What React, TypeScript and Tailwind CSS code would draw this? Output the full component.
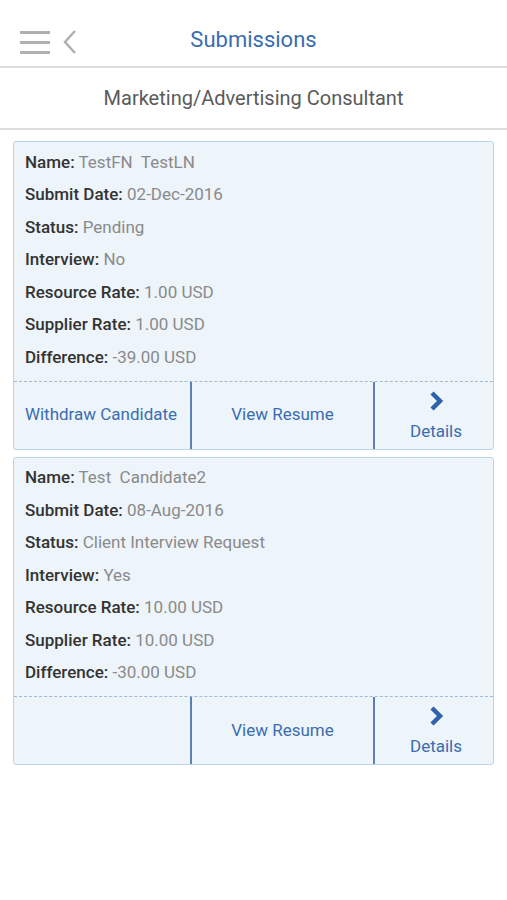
import React from 'react';

interface Submission {
  name: string;
  submitDate: string;
  status: string;
  interview: string;
  resourceRate: string;
  supplierRate: string;
  difference: string;
  canWithdraw: boolean;
}

const submissions: Submission[] = [
  {
    name: 'TestFN  TestLN',
    submitDate: '02-Dec-2016',
    status: 'Pending',
    interview: 'No',
    resourceRate: '1.00 USD',
    supplierRate: '1.00 USD',
    difference: '-39.00 USD',
    canWithdraw: true,
  },
  {
    name: 'Test  Candidate2',
    submitDate: '08-Aug-2016',
    status: 'Client Interview Request',
    interview: 'Yes',
    resourceRate: '10.00 USD',
    supplierRate: '10.00 USD',
    difference: '-30.00 USD',
    canWithdraw: false,
  },
];

function Row({ label, value }: { label: string; value: string }) {
  return (
    <div className="h-[32.5px] flex items-center text-[17px] whitespace-pre">
      <span className="font-medium text-[#333]">{label}:</span>
      <span className="text-[#8a8a8a]"> {value}</span>
    </div>
  );
}

function Card({ s }: { s: Submission }) {
  return (
    <div className="border border-[#b9d6e9] bg-[#edf4fa] rounded-[3px]">
      <div className="pt-1 pb-[7px] px-[11px]">
        <Row label="Name" value={s.name} />
        <Row label="Submit Date" value={s.submitDate} />
        <Row label="Status" value={s.status} />
        <Row label="Interview" value={s.interview} />
        <Row label="Resource Rate" value={s.resourceRate} />
        <Row label="Supplier Rate" value={s.supplierRate} />
        <Row label="Difference" value={s.difference} />
      </div>
      <div className="grid grid-cols-[176px_183px_1fr] h-[68px] border-t border-dashed border-[#a3b9cf] text-[17px] text-[#3a6db0]">
        <div className="flex items-center justify-center pr-[2px]">
          {s.canWithdraw && <span>Withdraw Candidate</span>}
        </div>
        <div className="flex items-center justify-center border-l-2 border-[#5b80b2]">
          <span>View Resume</span>
        </div>
        <div className="flex flex-col items-center border-l-2 border-[#5b80b2] pt-[9px] pl-[4px]">
          <svg width="16" height="20" viewBox="0 0 16 20" fill="none">
            <polyline points="4,2 12,10 4,18" stroke="#2f62aa" strokeWidth="4.5" strokeLinejoin="miter" />
          </svg>
          <span className="mt-[12px] leading-none">Details</span>
        </div>
      </div>
    </div>
  );
}

export default function App() {
  return (
    <div className="w-[507px] h-[900px] bg-white font-['Roboto',sans-serif]">
      <div className="h-[68px] relative flex items-center justify-center border-b-2 border-[#dcdcdc]">
        <div className="absolute left-[20px] top-[30px] flex items-center gap-[12px]">
          <div className="flex flex-col gap-[7px]">
            <div className="w-[30px] h-[3px] bg-[#b0b0b0]" />
            <div className="w-[30px] h-[3px] bg-[#b0b0b0]" />
            <div className="w-[30px] h-[3px] bg-[#b0b0b0]" />
          </div>
          <svg width="16" height="24" viewBox="0 0 16 24" fill="none">
            <polyline points="13,1 3,12 13,23" stroke="#b0b0b0" strokeWidth="2.5" />
          </svg>
        </div>
        <span className="text-[22px] text-[#3a6db0] mt-[13px]">Submissions</span>
      </div>
      <div className="h-[62px] flex items-center justify-center border-b-2 border-[#dcdcdc]">
        <span className="text-[20px] text-[#5a5a5a]">Marketing/Advertising Consultant</span>
      </div>
      <div className="px-[13px] pt-[11px] flex flex-col gap-[7px]">
        {submissions.map((s, i) => (
          <Card key={i} s={s} />
        ))}
      </div>
    </div>
  );
}
